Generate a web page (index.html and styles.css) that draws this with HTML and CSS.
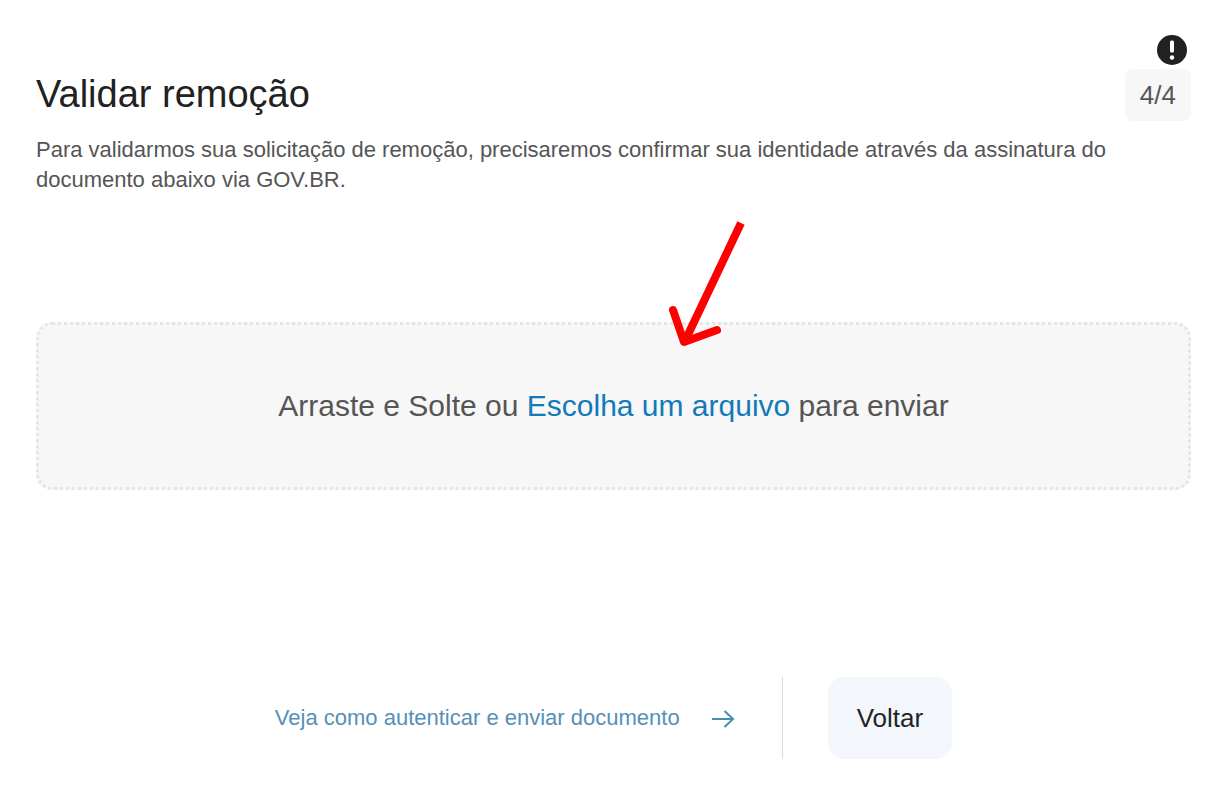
FILE: index.html
```html
<!DOCTYPE html>
<html lang="pt-BR">
<head>
<meta charset="utf-8">
<meta name="viewport" content="width=device-width, initial-scale=1">
<title>Validar remoção</title>
<link rel="stylesheet" href="styles.css">
</head>
<body>
<main class="page">
  <header class="header">
    <h1 class="title">Validar remoção</h1>
    <div class="status">
      <svg class="alert" viewBox="0 0 30 30" role="img" aria-label="Atenção">
        <circle cx="15" cy="15" r="15" fill="#212121"/>
        <rect x="13" y="5.500" width="4" height="12" rx="1.500" fill="#fff"/>
        <circle cx="15" cy="22.500" r="2.200" fill="#fff"/>
      </svg>
      <span class="step">4/4</span>
    </div>
  </header>
  <p class="intro">Para validarmos sua solicitação de remoção, precisaremos confirmar sua identidade através da assinatura do documento abaixo via GOV.BR.</p>
  <section class="dropzone">
    <p class="drop-text">Arraste e Solte ou <button class="choose" type="button">Escolha um arquivo</button> para enviar</p>
    <svg class="pointer" viewBox="0 0 80 130" aria-hidden="true" fill="none" stroke="#f00" stroke-width="8">
      <path d="M74 4 18 122"/>
      <path d="M6 91 17 123 50 111" stroke-linecap="round" stroke-linejoin="round"/>
    </svg>
  </section>
  <footer class="actions">
    <a class="help" href="#">
      <span>Veja como autenticar e enviar documento</span>
      <svg class="arrow" viewBox="0 0 24 20" aria-hidden="true" fill="none" stroke="#4a8db3" stroke-width="2">
        <path d="M1 11H22M13.500 3 22 11 13.500 19"/>
      </svg>
    </a>
    <span class="divider"></span>
    <button class="back" type="button">Voltar</button>
  </footer>
</main>
</body>
</html>
```
FILE: styles.css
```css
* {
  box-sizing: border-box;
}

body {
  margin: 0;
  background: #fff;
  color: #555;
  font-family: "Liberation Sans", Arial, sans-serif;
}

.page {
  padding: 35px 38px 48px 36px;
}

.header {
  display: flex;
  justify-content: space-between;
  align-items: flex-end;
}

.title {
  margin: 0 0 5px;
  color: #212121;
  font-size: 38px;
  font-weight: 400;
  line-height: 44px;
}

.status {
  display: flex;
  flex-direction: column;
  align-items: flex-end;
  gap: 4px;
}

.alert {
  width: 30px;
  height: 30px;
  margin-right: 4px;
}

.step {
  padding: 0 15px;
  border-radius: 8px;
  background: #f7f7f7;
  font-size: 26px;
  line-height: 52px;
}

.intro {
  margin: 14px 0 0;
  font-size: 22px;
  line-height: 30px;
}

.dropzone {
  position: relative;
  display: flex;
  justify-content: center;
  margin-top: 127px;
  padding: 63px 24px;
  border: 3px dotted #e4e5e8;
  border-radius: 16px;
  background: #f7f7f7;
}

.drop-text {
  margin: 0;
  font-size: 30px;
  line-height: 36px;
}

.choose {
  padding: 0;
  border: 0;
  background: none;
  color: #127ab8;
  font: inherit;
  cursor: pointer;
}

.pointer {
  position: absolute;
  bottom: 138px;
  left: calc(50% + 53px);
  width: 80px;
  height: 130px;
}

.actions {
  display: flex;
  justify-content: center;
  align-items: center;
  margin-top: 187px;
}

.help {
  display: flex;
  align-items: center;
  gap: 31px;
  color: #5590b8;
  font-size: 22px;
  line-height: 30px;
  text-decoration: none;
}

.arrow {
  width: 24px;
  height: 20px;
}

.divider {
  align-self: stretch;
  width: 1px;
  margin: 0 45px 0 47px;
  background: #dcdcdc;
}

.back {
  padding: 26px 29px;
  border: 0;
  border-radius: 16px;
  background: #f3f7fc;
  color: #212529;
  font-family: inherit;
  font-size: 26px;
  line-height: 30px;
  cursor: pointer;
}
```
